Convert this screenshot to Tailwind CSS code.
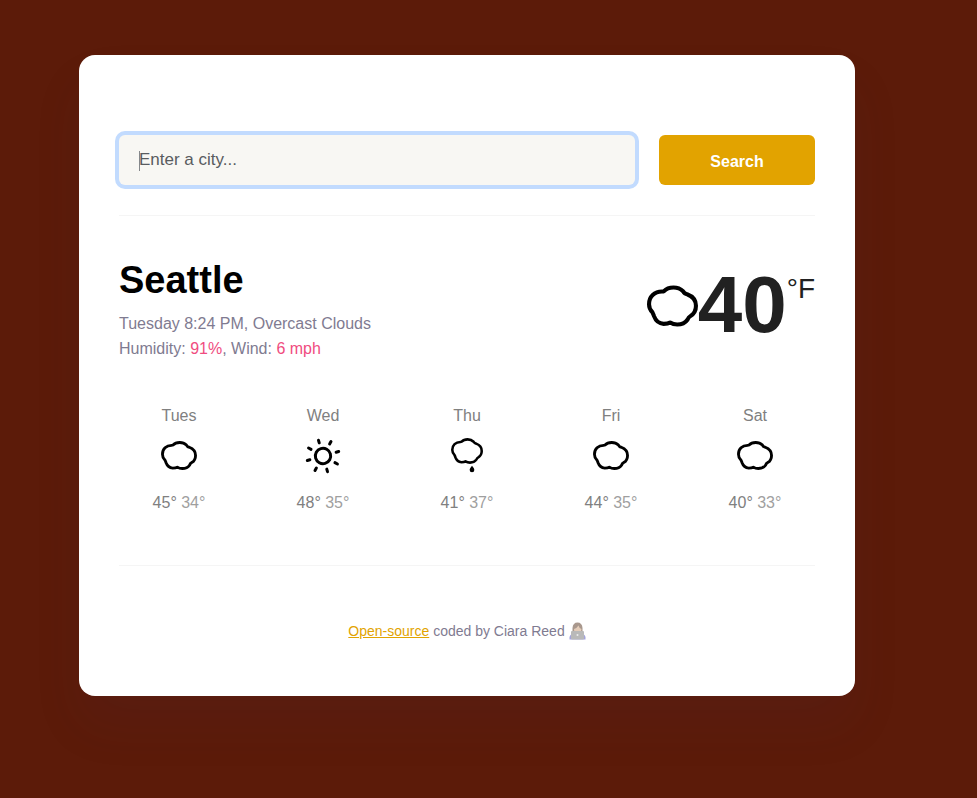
<!DOCTYPE html>
<html lang="en">
<head>
<meta charset="utf-8">
<meta name="viewport" content="width=device-width, initial-scale=1">
<title>Weather in Seattle</title>
<script src="https://cdn.jsdelivr.net/npm/@tailwindcss/browser@4"></script>
</head>
<body class="min-h-screen bg-[#5c1b09] pt-[55px] pr-[122px] pb-[102px] pl-[79px] font-['Liberation_Sans',Arial,sans-serif] text-base text-[#212121]">
<svg class="hidden" aria-hidden="true">
  <symbol id="cloud" viewBox="52 76 150 121">
    <path d="M102 93C109 85 118 82 130 82C142 82 152 87 158 93Q162 101 170 102C186 108 196 120 196 136C196 150 190 160 180 166Q174 169 171 177C164 187 154 191 141 191C133 191 126 189 120 185C114 189 108 189 101 189C87 188 77 178 73 167Q71 161 68 155C61 148 58 141 58 131C58 109 74 94 96 94Q100 94 102 93Z" fill="none" stroke="#000" stroke-width="12" stroke-linejoin="round"/>
  </symbol>
  <symbol id="sun" viewBox="0 0 108 108">
    <g fill="none" stroke="#000" stroke-linecap="round" stroke-width="9" transform="rotate(-16 54 54)">
      <circle cx="54" cy="54" r="23"/>
      <path d="M54 13V5M54 95v8M13 54H5M95 54h8M25 25l-6-6M83 25l6-6M25 83l-6 6M83 83l6 6"/>
    </g>
  </symbol>
</svg>
<main class="rounded-2xl bg-white px-10 pt-20 pb-[55px] shadow-[0_30px_50px_rgba(65,50,100,0.08)]">
  <form class="flex gap-6 border-b border-[#f5f5f5] pb-[30px]">
    <div class="relative min-w-0 flex-1">
      <input type="search" aria-label="City" placeholder="Enter a city..." class="h-[50px] w-full appearance-none rounded-md bg-[#f8f7f3] px-5 text-[17px] ring-4 ring-[#c2dbfe] outline-none placeholder:text-[#595c5f]">
      <span class="absolute top-4 left-5 h-5 w-px bg-[#85888b]" aria-hidden="true"></span>
    </div>
    <button type="submit" class="h-[50px] w-[156px] rounded-md bg-[#e2a300] pt-1 font-bold text-white">Search</button>
  </form>
  <section class="flex items-start justify-between pt-10">
    <div class="text-[#7f7b91]">
      <h1 class="text-[38px] leading-12 font-bold text-black">Seattle</h1>
      <p class="pt-[7px] leading-[25px]">Tuesday 8:24 PM, Overcast Clouds<br>Humidity: <span class="text-[#f04c80]">91%</span>, Wind: <span class="text-[#f04c80]">6 mph</span></p>
    </div>
    <div class="flex items-start pt-2">
      <svg class="mt-[21px] h-[42px] w-[51px]" role="img" aria-label="Overcast clouds"><use href="#cloud"/></svg>
      <span class="pt-px text-[80px] leading-20 font-bold">40</span>
      <span class="pt-[9px] text-[28px] leading-8">°F</span>
    </div>
  </section>
  <section class="-mx-3 grid grid-cols-5 pt-[43px] text-center text-[#808080]">
    <div><h2>Tues</h2><div class="flex h-[63px] items-center justify-center pb-2"><svg class="h-[29px] w-9"><use href="#cloud"/></svg></div><p>45° <span class="text-[#9f9f9f]">34°</span></p></div>
    <div><h2>Wed</h2><div class="flex h-[63px] items-center justify-center pb-2"><svg class="size-9"><use href="#sun"/></svg></div><p>48° <span class="text-[#9f9f9f]">35°</span></p></div>
    <div><h2>Thu</h2><div class="flex h-[63px] items-center justify-center pb-2"><svg class="h-9 w-8" viewBox="0 0 96 108"><use href="#cloud" x="0" y="0" width="96" height="78"/><path d="M63 83c4 5 7 9 7 13a7 7 0 0 1-14 0c0-4 3-8 7-13Z"/></svg></div><p>41° <span class="text-[#9f9f9f]">37°</span></p></div>
    <div><h2>Fri</h2><div class="flex h-[63px] items-center justify-center pb-2"><svg class="h-[29px] w-9"><use href="#cloud"/></svg></div><p>44° <span class="text-[#9f9f9f]">35°</span></p></div>
    <div><h2>Sat</h2><div class="flex h-[63px] items-center justify-center pb-2"><svg class="h-[29px] w-9"><use href="#cloud"/></svg></div><p>40° <span class="text-[#9f9f9f]">33°</span></p></div>
  </section>
  <footer class="mt-[50px] flex items-center justify-center gap-1 border-t border-[#f5f5f5] pt-[55px] text-sm text-[#7f7b91]">
    <p><a href="#" class="text-[#e2a300] underline">Open-source</a> coded by Ciara Reed</p>
    <svg class="h-[18px] w-[17px]" viewBox="0 0 34 36" role="img" aria-label="Technologist">
      <path d="M1 35V30Q3 23 11 22H23Q31 23 33 30V35Z" fill="#a3a3dc"/>
      <path d="M7 22V12Q8 1 17 1T27 12V22Z" fill="#a9988d"/>
      <path d="M10 14Q16 12 19 7Q20 12 25 14Q24 23 17 23T10 14Z" fill="#e5cdb9"/>
      <rect x="4" y="18" width="26" height="17" rx="2" fill="#b9b9b9"/>
      <circle cx="17" cy="26" r="2" fill="#ececec"/>
    </svg>
  </footer>
</main>
</body>
</html>
